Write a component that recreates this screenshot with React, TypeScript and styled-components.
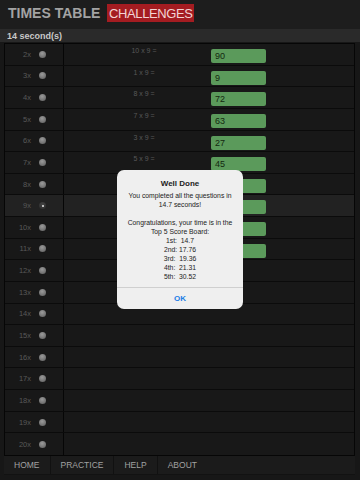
import React from 'react';
import styled, { createGlobalStyle } from 'styled-components';

const Global = createGlobalStyle`
  html, body { margin: 0; padding: 0; background: #161616; }
  body { width: 360px; height: 480px; overflow: hidden; font-family: "Liberation Sans", Arial, sans-serif; }
  * { box-sizing: border-box; }
`;

const Page = styled.div`
  position: relative;
  width: 360px;
  height: 480px;
  display: flex;
  flex-direction: column;
  background: #171717;
`;

const Header = styled.header`
  height: 29px;
  display: flex;
  align-items: center;
  gap: 7px;
  padding: 4px 0 7px 8px;
  background: #1d1d1d;
`;

const Title = styled.h1`
  margin: 0;
  font-size: 14px;
  font-weight: 700;
  color: #a3a3a3;
  line-height: 1;
`;

const Badge = styled.span`
  height: 18px;
  width: 87px;
  display: flex;
  align-items: center;
  justify-content: center;
  background: #a41c21;
  color: #f2d4d4;
  font-size: 13px;
  letter-spacing: -0.4px;
`;

const StatusBar = styled.div`
  height: 13px;
  margin-bottom: 1px;
  display: flex;
  align-items: center;
  padding-left: 7px;
  background: #2a2a2a;
  color: #c8c8c8;
  font-size: 9px;
  font-weight: 700;
`;

const Table = styled.div`
  margin: 0 5px 0 4px;
  height: 413px;
  border: 1px solid #060606;
  display: grid;
  grid-template-rows: repeat(19, 1fr);
  background: #181818;
`;

const Row = styled.div<{ $active?: boolean; $last?: boolean }>`
  display: grid;
  grid-template-columns: 59px 1fr;
  background: ${(p) => (p.$active ? '#222222' : '#181818')};
  border-bottom: ${(p) => (p.$last ? 'none' : '1px solid #0b0b0b')};
`;

const LeftCell = styled.div`
  display: flex;
  align-items: center;
  justify-content: flex-end;
  gap: 8px;
  padding-right: 17px;
  border-right: 1px solid #060606;
`;

const Label = styled.span`
  font-size: 7.5px;
  color: #585858;
`;

const Radio = styled.span<{ $checked?: boolean }>`
  width: 7px;
  height: 7px;
  border-radius: 50%;
  display: flex;
  align-items: center;
  justify-content: center;
  background: ${(p) =>
    p.$checked
      ? 'radial-gradient(circle at 50% 40%, #444 0%, #2a2a2a 100%)'
      : 'radial-gradient(circle at 45% 35%, #9a9a9a 0%, #6e6e6e 70%, #5a5a5a 100%)'};
  &::after {
    content: '';
    display: ${(p) => (p.$checked ? 'block' : 'none')};
    width: 2px;
    height: 2px;
    border-radius: 50%;
    background: #e8e8e8;
  }
`;

const MainCell = styled.div`
  display: grid;
  grid-template-columns: 147px 55px;
`;

const Question = styled.div`
  padding: 3px 0 0 13px;
  text-align: center;
  font-size: 7px;
  color: #585858;
`;

const Answer = styled.div`
  margin-top: 5px;
  height: 14px;
  border-radius: 2px;
  background: #5b9a5b;
  color: #13280f;
  font-size: 9px;
  display: flex;
  align-items: center;
  padding-left: 4px;
`;

const Footer = styled.nav`
  margin: 0 5px 0 4px;
  height: 19px;
  display: flex;
  background: #1b1b1b;
  border-bottom: 1px solid #121212;
`;

const NavItem = styled.span`
  display: flex;
  align-items: center;
  padding: 0 10px;
  font-size: 8.5px;
  color: #a2a2a2;
  border-right: 1px solid #111111;
  &:last-child { border-right: none; }
`;

const Dialog = styled.div`
  position: absolute;
  left: 117px;
  top: 170px;
  width: 126px;
  background: #efefef;
  border-radius: 7px;
  overflow: hidden;
  text-align: center;
  color: #222;
`;

const DialogBody = styled.div`
  padding: 9px 2px 6px;
`;

const DialogTitle = styled.div`
  font-size: 8px;
  font-weight: 700;
  line-height: 10px;
  margin-bottom: 2px;
`;

const Line = styled.div`
  font-size: 6.8px;
  line-height: 9px;
  min-height: 9px;
  white-space: pre;
`;

const DialogButton = styled.div`
  height: 22px;
  border-top: 1px solid #cfcfcf;
  display: flex;
  align-items: center;
  justify-content: center;
  color: #1a7de6;
  font-size: 8px;
  font-weight: 700;
`;

// Rows 8x-11x have answers hidden behind the dialog: only their green boxes show.
const questions: Array<[string, string] | null> = [
  ['10 x 9 =', '90'],
  ['1 x 9 =', '9'],
  ['8 x 9 =', '72'],
  ['7 x 9 =', '63'],
  ['3 x 9 =', '27'],
  ['5 x 9 =', '45'],
  ['', ''],
  ['', ''],
  ['', ''],
  ['', ''],
];

const lines = [
  'You completed all the questions in',
  '14.7 seconds!',
  '',
  'Congratulations, your time is in the',
  'Top 5 Score Board:',
  '1st:  14.7',
  '2nd: 17.76',
  '3rd:  19.36',
  '4th:  21.31',
  '5th:  30.52',
];

export default function App() {
  const rows = Array.from({ length: 19 }, (_, i) => i + 2);
  return (
    <Page>
      <Global />
      <Header>
        <Title>TIMES TABLE</Title>
        <Badge>CHALLENGES</Badge>
      </Header>
      <StatusBar>14 second(s)</StatusBar>
      <Table>
        {rows.map((n, i) => {
          const q = questions[i];
          return (
            <Row key={n} $active={n === 9} $last={n === 20}>
              <LeftCell>
                <Label>{n}x</Label>
                <Radio $checked={n === 9} />
              </LeftCell>
              <MainCell>
                <Question>{q ? q[0] : ''}</Question>
                {q ? <Answer>{q[1]}</Answer> : <span />}
              </MainCell>
            </Row>
          );
        })}
      </Table>
      <Footer>
        <NavItem>HOME</NavItem>
        <NavItem>PRACTICE</NavItem>
        <NavItem>HELP</NavItem>
        <NavItem>ABOUT</NavItem>
      </Footer>
      <Dialog>
        <DialogBody>
          <DialogTitle>Well Done</DialogTitle>
          {lines.map((l, i) => (
            <Line key={i}>{l}</Line>
          ))}
        </DialogBody>
        <DialogButton>OK</DialogButton>
      </Dialog>
    </Page>
  );
}
